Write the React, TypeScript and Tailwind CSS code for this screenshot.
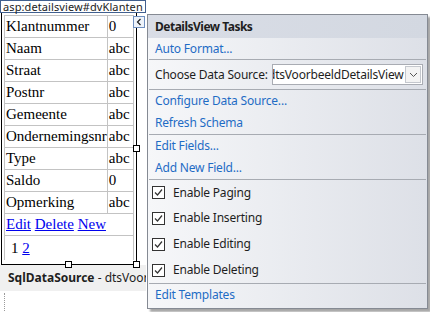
import React from 'react';

const rows: [string, string][] = [
  ['Klantnummer', '0'],
  ['Naam', 'abc'],
  ['Straat', 'abc'],
  ['Postnr', 'abc'],
  ['Gemeente', 'abc'],
  ['Ondernemingsnr', 'abc'],
  ['Type', 'abc'],
  ['Saldo', '0'],
  ['Opmerking', 'abc'],
];

const ui = { fontFamily: '"Noto Sans", "Open Sans", sans-serif' };
const serif = { fontFamily: '"Liberation Serif", "Times New Roman", serif' };

function Handle({ className }: { className: string }) {
  return <div className={`absolute w-[7px] h-[7px] bg-white border border-black ${className}`} />;
}

function Check() {
  return (
    <span className="w-[13px] h-[13px] border border-[#333] bg-white flex items-center justify-center shrink-0">
      <svg width="11" height="11" viewBox="0 0 11 11">
        <path d="M2 5.5 L4.5 8 L9 2.5" fill="none" stroke="#333" strokeWidth="1.2" />
      </svg>
    </span>
  );
}

function Sep() {
  return <div className="h-px bg-[#a7abb2] mx-[1px]" />;
}

function Link({ children, h }: { children: React.ReactNode; h: string }) {
  return <div className={`${h} flex items-center pl-[7px] text-[#1f6cc5]`}>{children}</div>;
}

function Toggle({ label, h }: { label: string; h: string }) {
  return (
    <div className={`${h} flex items-center gap-[8px] pl-[4px] text-[#1e1e1e]`}>
      <Check />
      <span>{label}</span>
    </div>
  );
}

export default function App() {
  return (
    <div className="relative w-[430px] h-[312px] bg-white overflow-hidden">
      {/* design surface */}
      <div className="flex flex-col items-start">
        <div
          className="h-[13px] px-[2px] border border-[#41608f] bg-white text-[11px] leading-[11px] text-[#222] tracking-[0.1px] whitespace-nowrap"
          style={ui}
        >
          asp:detailsview#dvKlanten
        </div>
        <div className="relative ml-[1px] w-[136px] h-[252px] border border-black border-t-0 pt-[2px] pl-[2px]" style={serif}>
          <table className="border-collapse text-[15px] leading-[17px] text-black">
            <tbody>
              {rows.map(([k, v]) => (
                <tr key={k} className="h-[22px]">
                  <td className="border border-[#c3c3c3] w-[102px] pl-[1px] whitespace-nowrap">{k}</td>
                  <td className="border border-[#c3c3c3] w-[26px] pl-[1px]">{v}</td>
                </tr>
              ))}
              <tr className="h-[22px]">
                <td colSpan={2} className="border border-[#c3c3c3] pl-[1px] text-[#0000ee]">
                  <span className="underline">Edit</span> <span className="underline">Delete</span>{' '}
                  <span className="underline">New</span>
                </td>
              </tr>
              <tr className="h-[24px]">
                <td colSpan={2} className="border border-[#c3c3c3] border-b-0 pl-[6px] pt-[2px]">
                  1 <span className="underline text-[#0000ee]">2</span>
                </td>
              </tr>
            </tbody>
          </table>
          <Handle className="right-[-4px] top-[132px]" />
          <Handle className="left-[63px] bottom-[-4px]" />
          <Handle className="right-[-4px] bottom-[-4px]" />
        </div>
        <div
          className="w-[146px] h-[26px] bg-[#f0f0f0] flex items-center pl-[8px] text-[12px] text-[#1e1e1e] overflow-hidden whitespace-nowrap"
          style={ui}
        >
          <span className="font-bold">SqlDataSource</span>
          <span>&nbsp;- dtsVoorb</span>
        </div>
        <div className="ml-[4px] mt-[2px] h-[30px] border-l border-dotted border-[#9a9a9a]" />
      </div>

      {/* smart tag glyph */}
      <div className="absolute left-[133px] top-[16px] w-[12px] h-[12px] border border-[#6f8fbf] bg-[#eef3fa] flex items-center justify-center">
        <svg width="6" height="8" viewBox="0 0 6 8">
          <path d="M4.5 1 L1.5 4 L4.5 7" fill="none" stroke="#1e1e1e" strokeWidth="1.2" />
        </svg>
      </div>

      {/* tasks panel */}
      <div
        className="absolute left-[147px] top-[14px] w-[281px] h-[295px] border border-[#858a93] bg-gradient-to-r from-[#f6f7f9] to-[#dde0e7] shadow-[3px_3px_2px_rgba(0,0,0,0.35)] flex flex-col text-[12px] tracking-[-0.2px]"
        style={ui}
      >
        <div className="h-[23px] bg-gradient-to-r from-[#d9dde6] to-[#d3d8e1] flex items-center pl-[7px] font-bold tracking-[-0.5px] text-[#1e1e1e]">
          DetailsView Tasks
        </div>
        <Link h="h-[21px]">Auto Format...</Link>
        <Sep />
        <div className="h-[29px] flex items-center pl-[7px] text-[#1e1e1e]">
          <span className="w-[117px]">Choose Data Source:</span>
          <div className="w-[151px] h-[21px] border border-[#a9acb3] bg-white flex items-center">
            <div className="flex-1 overflow-hidden whitespace-nowrap">
              <span className="ml-[-5px]">dtsVoorbeeldDetailsView</span>
            </div>
            <div className="w-[16px] h-[17px] mr-[1px] border border-[#c4c7cd] bg-[#f3f3f3] flex items-center justify-center">
              <svg width="9" height="6" viewBox="0 0 9 6">
                <path d="M1 1 L4.5 4.5 L8 1" fill="none" stroke="#555" strokeWidth="1" />
              </svg>
            </div>
          </div>
        </div>
        <Sep />
        <Link h="h-[22px]">Configure Data Source...</Link>
        <Link h="h-[22px]">Refresh Schema</Link>
        <Sep />
        <Link h="h-[22px]">Edit Fields...</Link>
        <Link h="h-[22px]">Add New Field...</Link>
        <Sep />
        <Toggle h="h-[25px]" label="Enable Paging" />
        <Toggle h="h-[26px]" label="Enable Inserting" />
        <Toggle h="h-[26px]" label="Enable Editing" />
        <Toggle h="h-[26px]" label="Enable Deleting" />
        <Sep />
        <Link h="h-[22px]">Edit Templates</Link>
      </div>
    </div>
  );
}
